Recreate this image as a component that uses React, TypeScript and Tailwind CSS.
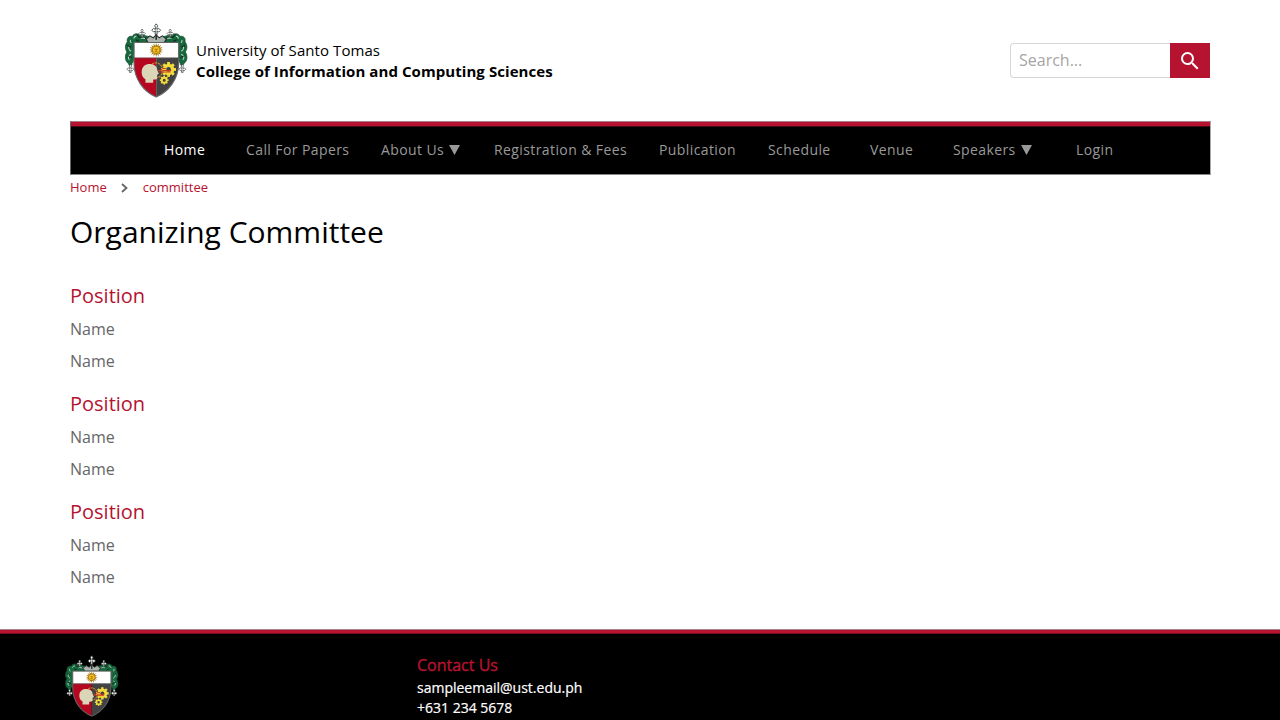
import React from "react";

function Cross({ x, y, s }: { x: number; y: number; s: number }) {
  return (
    <g transform={`translate(${x} ${y}) scale(${s})`}>
      <path
        d="M0-14 4-9 2-4 2 1 7-2 12 3 7 8 2 5 3 14H-3L-2 5-7 8-12 3-7-2-2 1-2-4-4-9Z"
        fill="#fff"
        stroke="#3c4441"
        strokeWidth="2.5"
      />
    </g>
  );
}

const teeth = [0, 45, 90, 135, 180, 225, 270, 315];
const rays = [0, 22.5, 45, 67.5, 90, 112.5, 135, 157.5];

function Gear({ x, y, r, hole }: { x: number; y: number; r: number; hole: number }) {
  return (
    <g transform={`translate(${x} ${y})`}>
      {teeth.map((a) => (
        <rect key={a} x={-r * 0.25} y={-r * 1.3} width={r * 0.5} height={r * 0.6} fill="#f2dc3c" transform={`rotate(${a})`} />
      ))}
      <circle r={(r + hole) / 2} fill="none" stroke="#f2dc3c" strokeWidth={r - hole} />
    </g>
  );
}

function Mantle() {
  return (
    <g>
      <path
        d="M100 60C88 60 84 52 74 58C68 49 54 50 50 60C40 57 32 65 35 76C27 86 28 98 34 106C26 118 28 134 38 140C40 150 50 148 49 140C57 130 58 118 55 106V80H100L105 72Z"
        fill="#17683d"
        stroke="#0d4026"
        strokeWidth="2"
      />
      <path
        d="M96 68C86 67 80 62 75 66M62 59C56 60 55 63 54 66M44 70C43 75 44 77 47 79M41 88C37 94 40 100 46 104M46 113C38 117 36 123 41 130"
        fill="none"
        stroke="#c4d8cc"
        strokeWidth="3"
      />
      <path d="M64 54 71 63 80 61M35 86 46 92M36 117 49 123M88 63 94 74M60 70 70 75" fill="none" stroke="#18251d" strokeWidth="3" />
    </g>
  );
}

function Crest({ className }: { className: string }) {
  return (
    <svg className={className} viewBox="28 20 188 223" preserveAspectRatio="none" aria-hidden="true">
      <Mantle />
      <g transform="translate(242 0) scale(-1 1)">
        <Mantle />
      </g>
      <path d="M91 68 102 58 112 64 121 55 130 64 140 58 151 68 145 78H97Z" fill="#aab3ae" stroke="#25302a" strokeWidth="3" />
      <Cross x={121} y={38} s={1.1} />
      <Cross x={79} y={49} s={0.8} />
      <Cross x={163} y={49} s={0.8} />
      <Cross x={44} y={155} s={0.85} />
      <Cross x={199} y={155} s={0.85} />
      <path d="M121 54V70" stroke="#333" strokeWidth="5" />
      <path d="M55 78H188V123H55Z" fill="#fff" />
      <path d="M55 123H121V240C84 224 55 187 55 140Z" fill="#b5071f" />
      <path d="M121 123H188V140C188 187 158 224 121 240Z" fill="#424143" />
      <path d="M55 78H188V140C188 187 158 224 121 240C84 224 55 187 55 140Z" fill="none" stroke="#666" strokeWidth="3.5" />
      <path d="M55 124H188" stroke="#555" strokeWidth="2" />
      <g transform="translate(121 100)">
        {rays.map((a) => (
          <path key={a} d="M0-21 3-9V9L0 21-3 9V-9Z" fill="#9c6d00" transform={`rotate(${a})`} />
        ))}
        <circle r="11" fill="#f5c51b" stroke="#9c6510" strokeWidth="1.5" />
        <path d="M-5-2H5M0-2V4M-4 5H4" stroke="#8f540f" strokeWidth="2" fill="none" />
      </g>
      <path
        d="M109 142C122 133 139 142 140 158C141 173 131 183 123 182"
        fill="none"
        stroke="#c98c30"
        strokeWidth="3.5"
        strokeDasharray="7 2"
      />
      <Gear x={158} y={158} r={17} hole={7} />
      <Gear x={145} y={190} r={10} hole={4.5} />
      <path
        d="M89 198V187C80 183 77 173 78 163C79 148 91 141 104 142C117 143 124 150 124 160L129 171 124 174V184C123 189 115 188 112 188V198Z"
        fill="#dcd6b8"
      />
      <path d="M126 161H135L140 155H150M130 166H164M139 161H166" fill="none" stroke="#d03a22" strokeWidth="3" />
    </svg>
  );
}

const navItems = [
  { label: "Home", cell: "w-[82px] text-white" },
  { label: "Call For Papers", cell: "w-[135px]" },
  { label: "About Us", cell: "w-[113px]", menu: true },
  { label: "Registration & Fees", cell: "w-[165px]" },
  { label: "Publication", cell: "w-[109px]" },
  { label: "Schedule", cell: "w-[102px]" },
  { label: "Venue", cell: "w-[83px]" },
  { label: "Speakers", cell: "w-[123px]", menu: true },
  { label: "Login", cell: "w-[60px]" },
];

function Header() {
  return (
    <header className="flex h-[121px] items-start justify-between pl-[55px]">
      <div className="flex pt-[23px]">
        <Crest className="h-[75px] w-[63px] shrink-0" />
        <div className="pt-[17px] pl-2 text-[15px] leading-[21px] whitespace-nowrap text-black">
          <p className="tracking-[0.07px]">University of Santo Tomas</p>
          <p className="font-bold tracking-[0.07px]">College of Information and Computing Sciences</p>
        </div>
      </div>
      <form className="mt-[43px] flex h-[35px] w-[200px]">
        <input
          type="text"
          placeholder="Search..."
          className="h-full w-[160px] rounded-l border border-r-0 border-[#d8d8d8] pr-2 pb-0.5 pl-2 text-base outline-none placeholder:text-[#a5a5a5]"
        />
        <button type="button" aria-label="Search" className="flex h-full w-10 items-center justify-center bg-[#b5132f] pr-px">
          <svg className="size-6" viewBox="0 0 24 24" fill="#fff">
            <path d="M15.5 14h-.79l-.28-.27A6.471 6.471 0 0 0 16 9.5 6.5 6.5 0 1 0 9.5 16c1.61 0 3.09-.59 4.23-1.57l.27.28v.79l5 4.99L20.49 19l-4.99-5zm-6 0C7.01 14 5 11.99 5 9.5S7.01 5 9.5 5 14 7.01 14 9.5 11.99 14 9.5 14z" />
          </svg>
        </button>
      </form>
    </header>
  );
}

function Navigation() {
  return (
    <nav className="h-[54px] w-[1141px] border border-t-[#a5808a] border-r-[#aaa] border-b-[#888] border-l-[#666] bg-black">
      <div className="h-[5px] border-b border-[#4a0813] bg-[#b5132f]" />
      <div className="flex h-[47px] pb-px pl-[93px] text-sm font-medium tracking-[0.4px] whitespace-nowrap text-[#999]">
        {navItems.map((item) => (
          <a key={item.label} className={`flex items-center ${item.cell}`}>
            {item.label}
            {item.menu && (
              <svg className="ml-[5px] h-[10px] w-[11px]" viewBox="0 0 11 10" fill="currentColor">
                <path d="M0 0H11L5.5 10Z" />
              </svg>
            )}
          </a>
        ))}
      </div>
    </nav>
  );
}

function Group() {
  return (
    <section className="h-[108px]">
      <h2 className="text-xl leading-7 text-[#b5132f]">Position</h2>
      <p className="mt-[3px] text-base leading-8 text-[#666]">Name</p>
      <p className="text-base leading-8 text-[#666]">Name</p>
    </section>
  );
}

export default function App() {
  return (
    <div className="flex h-screen flex-col overflow-hidden bg-white font-['Open_Sans',sans-serif]">
      <div className="mx-auto w-[1140px] flex-1">
        <Header />
        <Navigation />
        <div className="flex h-[26px] items-center text-[13px] text-[#b5132f]">
          <a>Home</a>
          <svg className="mr-[15px] ml-[14px] h-[10px] w-[7px]" viewBox="0 0 7 10" fill="none" stroke="#666" strokeWidth="1.8">
            <path d="m1 1 4.5 4L1 9" />
          </svg>
          <a>committee</a>
        </div>
        <main>
          <h1 className="mt-[10px] mb-[29px] text-[30px] leading-[42px] text-black">Organizing Committee</h1>
          <Group />
          <Group />
          <Group />
        </main>
      </div>
      <footer className="h-[91px] shrink-0 border-t border-[#a5808a] bg-black">
        <div className="h-1 border-b border-[#7a0c20] bg-[#b5132f]" />
        <div className="flex pl-[65px]">
          <Crest className="mt-[21px] h-[62px] w-[54px] shrink-0" />
          <div className="ml-[298px] pt-5 whitespace-nowrap">
            <h3 className="text-base leading-[22px] text-[#b5132f] [-webkit-text-stroke:0.4px_#b5132f]">Contact Us</h3>
            <p className="mt-0.5 text-sm leading-5 text-white [-webkit-text-stroke:0.2px_#fff]">sampleemail@ust.edu.ph</p>
            <p className="text-sm leading-5 text-white [-webkit-text-stroke:0.2px_#fff]">+631 234 5678</p>
          </div>
        </div>
      </footer>
    </div>
  );
}
